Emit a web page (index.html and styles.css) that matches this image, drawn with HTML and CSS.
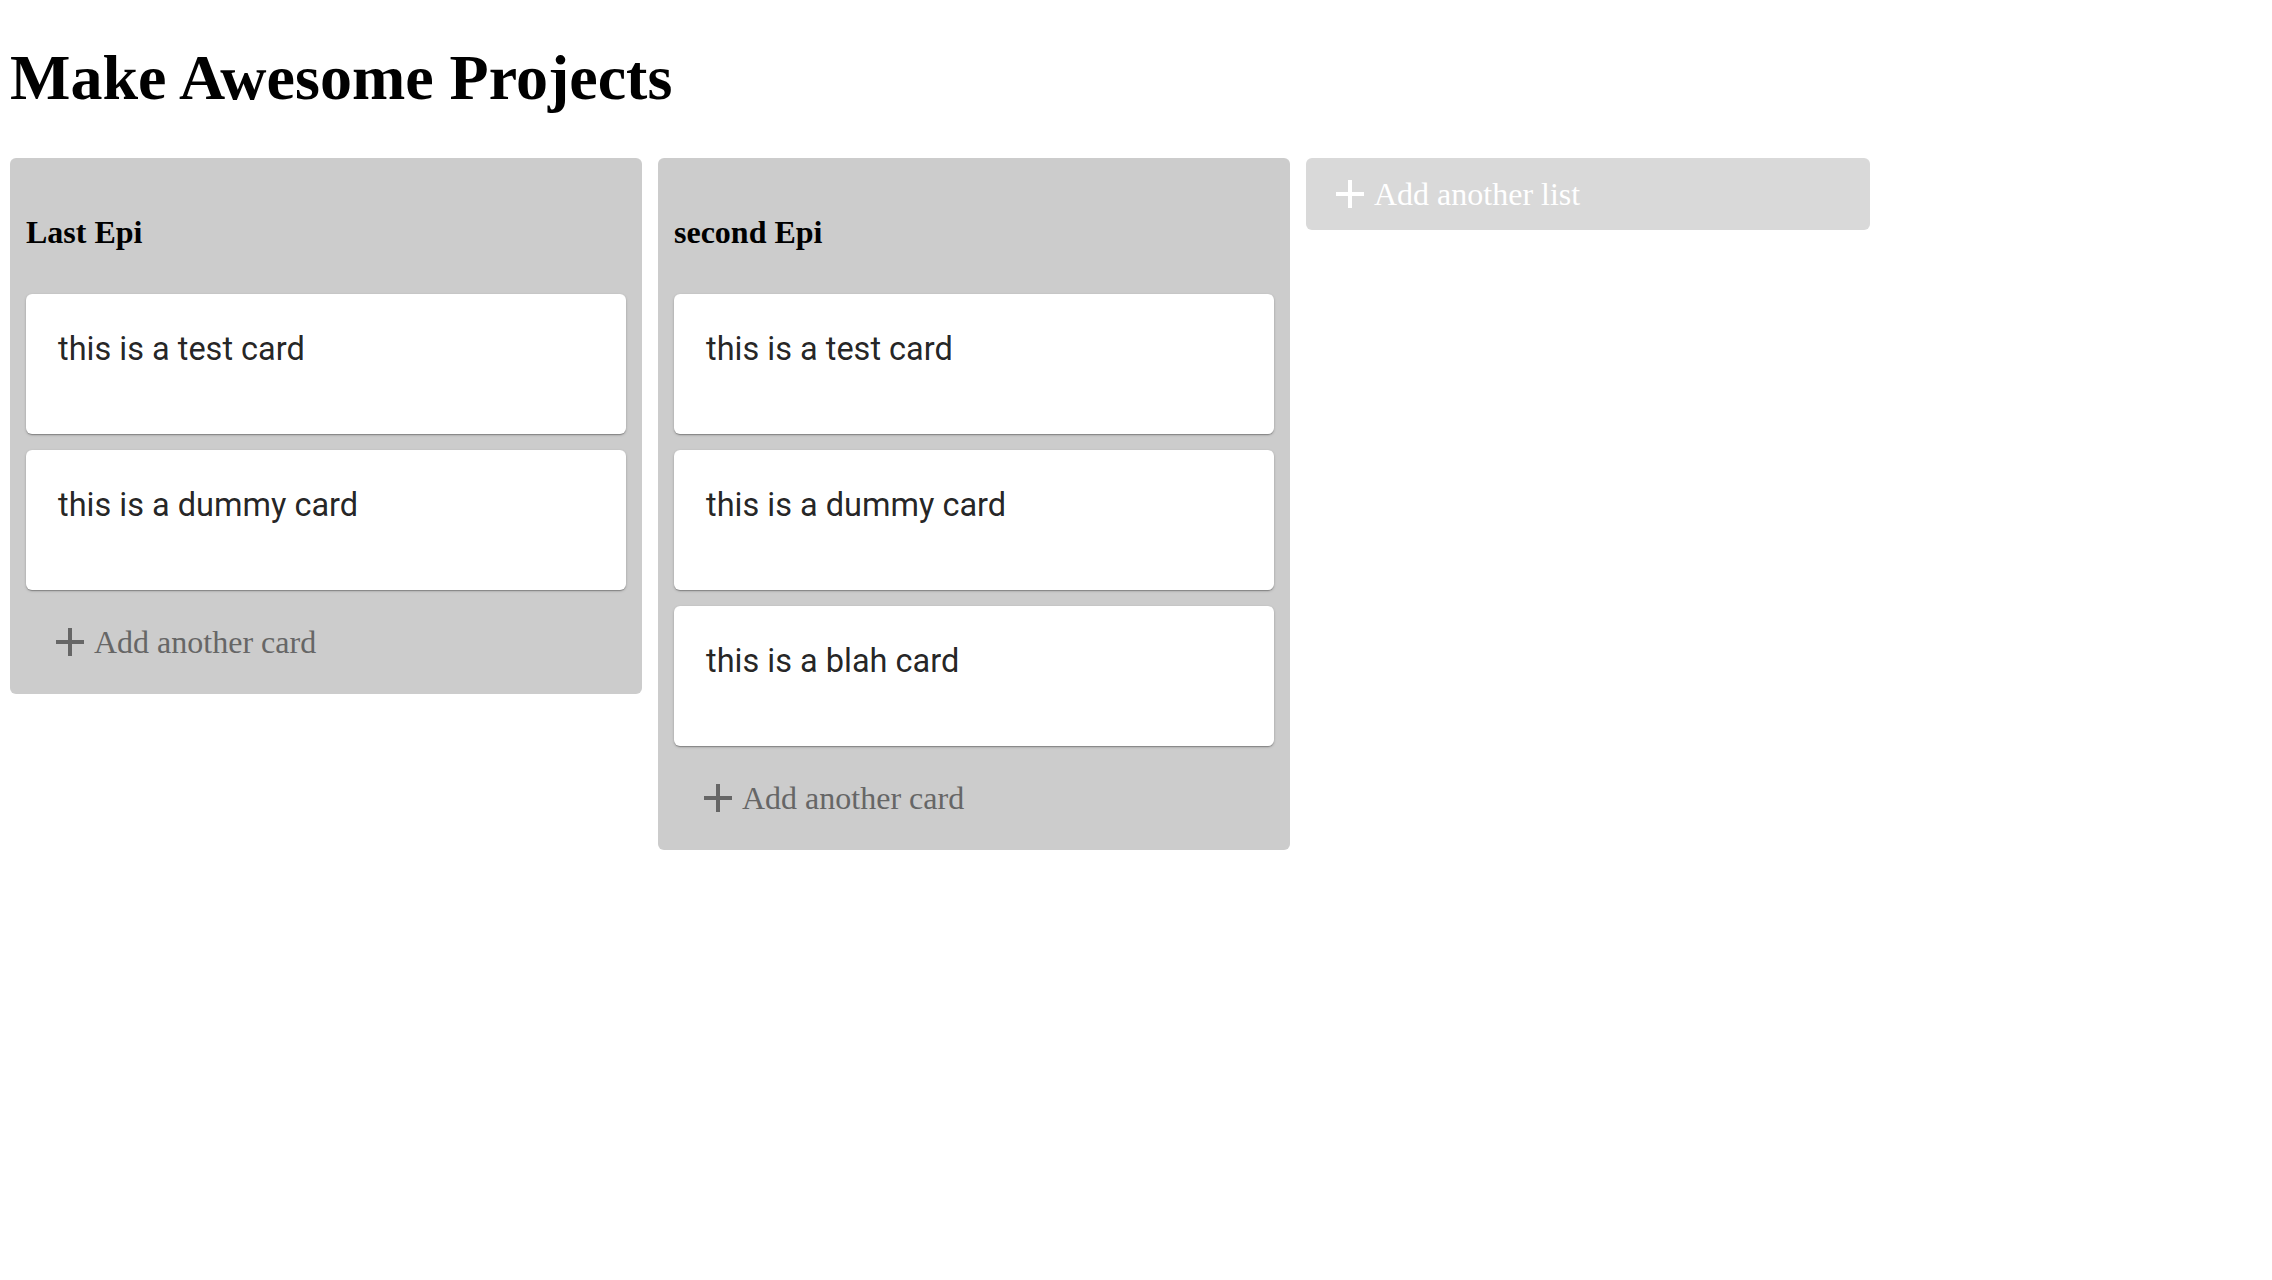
FILE: index.html
```html
<!DOCTYPE html>
<html lang="en">
<head>
<meta charset="utf-8">
<title>Make Awesome Projects</title>
<link rel="stylesheet" href="styles.css">
</head>
<body>
<h1 class="title">Make Awesome Projects</h1>
<div class="board">
  <section class="list">
    <h4 class="list-title">Last Epi</h4>
    <div class="card"><p class="card-text">this is a test card</p></div>
    <div class="card"><p class="card-text">this is a dummy card</p></div>
    <div class="add-card">
      <svg class="plus" viewBox="0 0 24 24" width="48" height="48"><path d="M19 13h-6v6h-2v-6H5v-2h6V5h2v6h6v2z"/></svg>
      <span>Add another card</span>
    </div>
  </section>
  <section class="list">
    <h4 class="list-title">second Epi</h4>
    <div class="card"><p class="card-text">this is a test card</p></div>
    <div class="card"><p class="card-text">this is a dummy card</p></div>
    <div class="card"><p class="card-text">this is a blah card</p></div>
    <div class="add-card">
      <svg class="plus" viewBox="0 0 24 24" width="48" height="48"><path d="M19 13h-6v6h-2v-6H5v-2h6V5h2v6h6v2z"/></svg>
      <span>Add another card</span>
    </div>
  </section>
  <div class="add-list">
    <svg class="plus" viewBox="0 0 24 24" width="48" height="48"><path d="M19 13h-6v6h-2v-6H5v-2h6V5h2v6h6v2z"/></svg>
    <span>Add another list</span>
  </div>
</div>
</body>
</html>
```
FILE: styles.css
```css
html, body {
  background: #ffffff;
}
body {
  margin: 10px;
  font-family: "Liberation Serif", "Times New Roman", serif;
  color: #000;
}
.title {
  font-size: 64px;
  font-weight: bold;
  line-height: 72px;
  margin: 32px 0 44px 0;
}
.board {
  display: flex;
  align-items: flex-start;
  gap: 16px;
}
.list {
  width: 632px;
  box-sizing: border-box;
  background: #cccccc;
  border-radius: 6px;
  padding: 16px;
}
.list-title {
  font-size: 32px;
  font-weight: bold;
  line-height: 37px;
  margin: 40px 0 43px 0;
}
.card {
  background: #ffffff;
  border-radius: 6px;
  box-shadow: 0 1px 3px rgba(0,0,0,0.2), 0 1px 1px rgba(0,0,0,0.14), 0 2px 1px -1px rgba(0,0,0,0.12);
  padding: 31px 32px 61px 32px;
  margin-bottom: 16px;
}
.card-text {
  margin: 0;
  font-family: Roboto, "Liberation Sans", sans-serif;
  font-size: 32.5px;
  line-height: 48px;
  color: rgba(0,0,0,0.87);
}
.add-card {
  display: flex;
  align-items: center;
  height: 72px;
  padding-left: 20px;
  color: #666666;
  font-size: 32px;
}
.plus {
  fill: currentColor;
  flex: none;
}
.add-list {
  width: 564px;
  height: 72px;
  box-sizing: border-box;
  background: #d9d9d9;
  border-radius: 6px;
  display: flex;
  align-items: center;
  padding-left: 20px;
  color: #ffffff;
  font-size: 32px;
}
```
